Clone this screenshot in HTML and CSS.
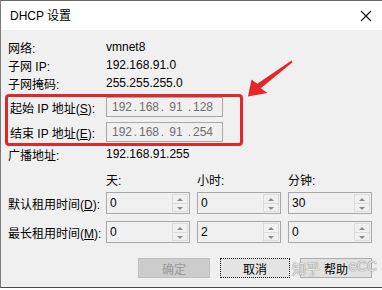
FILE: index.html
```html
<!DOCTYPE html>
<html lang="zh-CN">
    <head>
        <meta charset="UTF-8" />
        <meta name="viewport" content="width=device-width, initial-scale=1.0" />
        <title>DHCP 设置</title>
        <link rel="stylesheet" href="styles.css">
    </head>
    <body>
        <div class="dialog">
            <div class="titlebar">
                <span class="title">DHCP 设置</span>
                <svg class="close" width="12" height="12" viewBox="0 0 12 12">
                    <path d="M1 1 L11 11 M11 1 L1 11" stroke="#111" stroke-width="1.1" fill="none" />
                </svg>
            </div>

            <div class="content">
                <div class="info">
                    <div class="row"><span class="label">网络:</span><span>vmnet8</span></div>
                    <div class="row"><span class="label">子网 IP:</span><span>192.168.91.0</span></div>
                    <div class="row"><span class="label">子网掩码:</span><span>255.255.255.0</span></div>
                </div>

                <div class="range">
                    <div class="row">
                        <span class="label">起始 IP 地址(<u>S</u>):</span>
                        <div class="ip">
                            <span>192</span><i>.</i><span>168</span><i>.</i><span>91</span><i>.</i><span>128</span>
                        </div>
                    </div>
                    <div class="row">
                        <span class="label">结束 IP 地址(<u>E</u>):</span>
                        <div class="ip">
                            <span>192</span><i>.</i><span>168</span><i>.</i><span>91</span><i>.</i><span>254</span>
                        </div>
                    </div>
                </div>

                <div class="row bcast"><span class="label">广播地址:</span><span>192.168.91.255</span></div>

                <div class="heads">
                    <span></span><span>天:</span><span>小时:</span><span>分钟:</span>
                </div>
                <div class="lease">
                    <span class="label">默认租用时间(<u>D</u>):</span>
                    <div class="spin"><span class="val">0</span><span class="arrows"><b class="up"></b><b class="down"></b></span></div>
                    <div class="spin"><span class="val">0</span><span class="arrows"><b class="up"></b><b class="down"></b></span></div>
                    <div class="spin"><span class="val">30</span><span class="arrows"><b class="up"></b><b class="down"></b></span></div>

                    <span class="label">最长租用时间(<u>M</u>):</span>
                    <div class="spin"><span class="val">0</span><span class="arrows"><b class="up"></b><b class="down"></b></span></div>
                    <div class="spin"><span class="val">2</span><span class="arrows"><b class="up"></b><b class="down"></b></span></div>
                    <div class="spin"><span class="val">0</span><span class="arrows"><b class="up"></b><b class="down"></b></span></div>
                </div>

                <div class="buttons">
                    <button class="btn disabled">确定</button>
                    <button class="btn focus">取消</button>
                    <button class="btn">帮助</button>
                </div>
                <span class="watermark wm-left">知乎</span>
                <span class="watermark wm-right">eCC</span>
            </div>

            <!-- 빨간 화살표 -->
            <svg class="arrow" width="382" height="290" viewBox="0 0 382 290">
                <polygon points="291.5,60.6 257.3,83.8 251.5,79.5 248,96.5 267.5,93 260.8,88.3 292.6,62.3" fill="#e8262a" />
            </svg>
        </div>
    </body>
</html>
```

FILE: styles.css
```css
* {
    padding: 0;
    margin: 0;
    box-sizing: border-box;
}
body {
    background: #fff;
    font-family: "Liberation Sans", "Noto Sans CJK SC", sans-serif;
    font-size: 12px;
    color: #000;
}
.dialog {
    width: 382px;
    position: relative;
    border-left: 1px solid #7a7a7a;
    border-bottom: 1px solid #4a4a4a;
}
.titlebar {
    height: 30px;
    background: #fff;
    border-top: 1px solid #6a6a6a;
    display: flex;
    align-items: center;
    justify-content: space-between;
    padding: 0 10px 0 9px;
}
.title {
    line-height: 14px;
}
.content {
    height: 257px;
    background: #f0f0f0;
    padding: 8px 0 0 7px;
    position: relative;
}

.row {
    display: flex;
    align-items: center;
    height: 18px;
}
.row .label {
    width: 98px;
    flex: none;
}
.range {
    margin: 2px 0 0 -3px;
    width: 238px;
    border: 3px solid #e0272c;
    border-radius: 4px;
    padding: 0 0 1px 2px;
    display: flex;
    flex-direction: column;
    gap: 5px;
}
.range .row {
    height: 20px;
}
.range .label {
    width: 96px;
}
.ip {
    width: 117px;
    height: 20px;
    border: 1px solid #a8a8a8;
    display: flex;
    align-items: center;
    padding-left: 4px;
    color: #6e6e6e;
}
.ip span {
    width: 22px;
    text-align: center;
}
.ip i {
    font-style: normal;
    width: 5px;
    text-align: center;
}
.bcast {
    height: 16px;
}

.heads {
    margin-top: 12px;
    height: 18px;
    display: grid;
    grid-template-columns: 91px 84px 84px 84px;
    column-gap: 7px;
    line-height: 14px;
}
.lease {
    display: grid;
    grid-template-columns: 91px 84px 84px 84px;
    grid-auto-rows: 22px;
    column-gap: 7px;
    row-gap: 7px;
    align-items: center;
}
.lease .label {
    white-space: nowrap;
}
.spin {
    height: 22px;
    border: 1px solid #a8a8a8;
    display: flex;
    justify-content: space-between;
}
.spin .val {
    padding: 3px 0 0 3px;
    line-height: 14px;
}
.arrows {
    width: 16px;
    margin: 1px 1px 1px 0;
    display: flex;
    flex-direction: column;
    border: 1px solid #dcdcdc;
}
.arrows b {
    flex: 1;
    position: relative;
}
.arrows .up {
    border-bottom: 1px solid #dcdcdc;
}
.arrows b::after {
    content: "";
    position: absolute;
    left: 4px;
    top: 3px;
    border-left: 3px solid transparent;
    border-right: 3px solid transparent;
}
.arrows .up::after {
    border-bottom: 3px solid #8a8a8a;
}
.arrows .down::after {
    border-top: 3px solid #8a8a8a;
}

.buttons {
    margin-top: 15px;
    padding-right: 10px;
    display: flex;
    justify-content: flex-end;
    gap: 10px;
}
.btn {
    font: inherit;
    width: 72px;
    height: 20px;
    background: #e1e1e1;
    border: 1px solid #adadad;
    color: #000;
}
.btn.disabled {
    background: #cccccc;
    border-color: #bfbfbf;
    color: #9a9a9a;
}
.btn.focus {
    width: 70px;
    border: 1px dotted #1a1a1a;
    background: #e5e5e5;
}
.watermark {
    position: absolute;
    top: 228px;
    font-size: 14px;
    color: rgba(255, 255, 255, 0.75);
    text-shadow: 0 0 1px #888, 0 0 1px #888;
    pointer-events: none;
}
.wm-left {
    left: 291px;
}
.wm-right {
    left: 348px;
}
.arrow {
    position: absolute;
    left: -1px;
    top: 0;
    pointer-events: none;
}
```
